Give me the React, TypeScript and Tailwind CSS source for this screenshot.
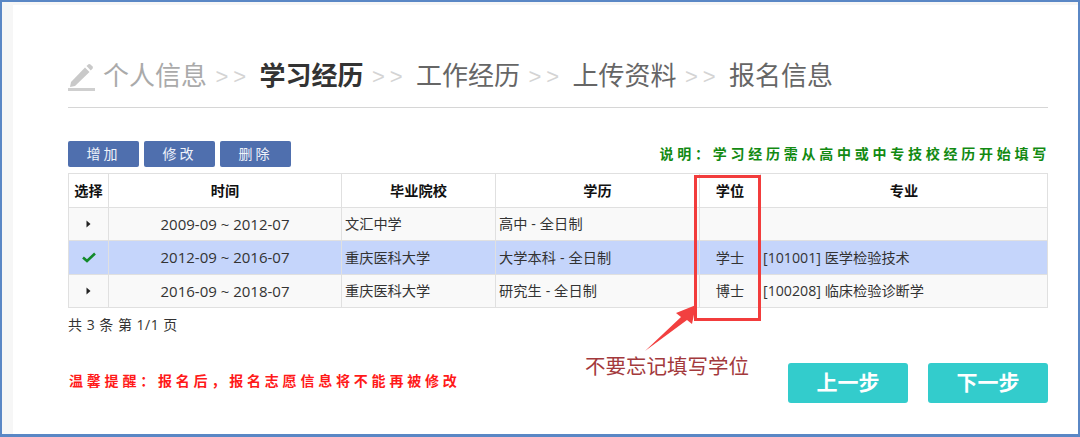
import React from "react";

const FONT = '"Liberation Sans", "Noto Sans CJK SC", sans-serif';
const CELL_FONT = '"Open Sans", "Noto Sans CJK SC", sans-serif';

const rows = [
  { sel: false, time: "2009-09 ~ 2012-07", school: "文汇中学", edu: "高中 - 全日制", deg: "", major: "" },
  { sel: true, time: "2012-09 ~ 2016-07", school: "重庆医科大学", edu: "大学本科 - 全日制", deg: "学士", major: "[101001] 医学检验技术" },
  { sel: false, time: "2016-09 ~ 2018-07", school: "重庆医科大学", edu: "研究生 - 全日制", deg: "博士", major: "[100208] 临床检验诊断学" },
];

function Sep() {
  return <span className="w-[52.5px] text-center text-[22px] tracking-[5px] text-[#d4d4d4]">&gt;&gt;</span>;
}

function Pencil() {
  return (
    <svg width="27" height="28" viewBox="0 0 27 28" className="mr-[8px]">
      <path d="M3 19 L17 4.5 L21.5 9 L7 23 L2 24 Z" fill="#c9c9c9" />
      <path d="M18.5 3 L20.5 1.2 Q21.5 .6 22.5 1.4 L24.6 3.6 Q25.3 4.6 24.6 5.4 L22.8 7.4 Z" fill="#c9c9c9" />
      <rect x="0" y="25" width="27" height="3" fill="#cfcfcf" />
    </svg>
  );
}

export default function App() {
  return (
    <div
      className="relative h-[437px] w-[1080px] overflow-hidden border-x-2 border-t-2 border-b-[3px] border-[#5a87c5] bg-[#f6f6f6] pl-[11px] pt-[3px] pr-0"
      style={{ fontFamily: FONT }}
    >
      <div className="h-full bg-white pl-[55px] pr-[30px] pt-[51px]">
        <div className="flex h-[41px] items-center text-[26px] leading-[41px] text-[#666]">
          <Pencil />
          <span className="text-[#aaaaaa]">个人信息</span>
          <Sep />
          <span className="font-bold text-[#333]">学习经历</span>
          <Sep />
          <span>工作经历</span>
          <Sep />
          <span>上传资料</span>
          <Sep />
          <span>报名信息</span>
        </div>
        <div className="mt-[10px] h-px bg-[#d6d6d6]" />

        <div className="mt-[33px] flex h-[27px] items-start justify-between">
          <div className="flex gap-[5px]">
            {["增加", "修改", "删除"].map((t) => (
              <button
                key={t}
                className="h-[26px] w-[71px] rounded-[2px] bg-[#4f6fae] text-[14px] tracking-[3px] text-[#eef2fa]"
              >
                {t}
              </button>
            ))}
          </div>
          <span className="mr-[-2px] mt-[3px] text-[14px] font-bold tracking-[3.75px] text-[#128a12]">
            说明：学习经历需从高中或中专技校经历开始填写
          </span>
        </div>

        <table
          className="mt-[5px] w-[979px] table-fixed border-collapse text-[14.2px] text-[#333]"
          style={{ fontFamily: CELL_FONT }}
        >
          <colgroup>
            <col className="w-[40px]" />
            <col className="w-[233px]" />
            <col className="w-[154px]" />
            <col className="w-[204px]" />
            <col className="w-[61px]" />
            <col className="w-[287px]" />
          </colgroup>
          <thead>
            <tr className="h-[33.5px] bg-white">
              {["选择", "时间", "毕业院校", "学历", "学位", "专业"].map((h) => (
                <th key={h} className="border border-[#e0e0e0] p-0 text-center font-bold text-[#111]">
                  {h}
                </th>
              ))}
            </tr>
          </thead>
          <tbody>
            {rows.map((r) => (
              <tr key={r.time} className={r.sel ? "h-[33.5px] bg-[#c5d5fb]" : "h-[33.5px] bg-[#f9f9f9]"}>
                <td className="border border-[#e0e0e0] p-0 text-center">
                  {r.sel ? (
                    <svg width="14" height="11" viewBox="0 0 14 11" className="mx-auto">
                      <path d="M1 5.5 L5 9 L13 1.5" fill="none" stroke="#128a2a" strokeWidth="2.6" />
                    </svg>
                  ) : (
                    <svg width="5" height="8" viewBox="0 0 5 8" className="mx-auto">
                      <path d="M0.5 0.5 L4.5 4 L0.5 7.5 Z" fill="#222" />
                    </svg>
                  )}
                </td>
                <td className="border border-[#e0e0e0] p-0 text-center text-[15px]">{r.time}</td>
                <td className="border border-[#e0e0e0] px-[3px] py-0">{r.school}</td>
                <td className="border border-[#e0e0e0] px-[3px] py-0 tracking-[0.1px]">{r.edu}</td>
                <td className="border border-[#e0e0e0] p-0 text-center">{r.deg}</td>
                <td className="border border-[#e0e0e0] px-[2px] py-0">{r.major}</td>
              </tr>
            ))}
          </tbody>
        </table>

        <div className="mt-[7px] text-[14px] leading-[20px] tracking-[0.5px] text-[#333]" style={{ fontFamily: CELL_FONT }}>
          共 3 条 第 1/1 页
        </div>

        <div className="mt-[28px] flex items-start justify-between">
          <span className="ml-px mt-[8px] text-[14px] font-bold tracking-[3.8px] text-[#ff1a1a]">
            温馨提醒：报名后，报名志愿信息将不能再被修改
          </span>
          <div className="flex gap-[20px]">
            <button className="h-[40px] w-[120px] rounded-[3px] bg-[#33cccc] text-[21px] font-bold text-white">上一步</button>
            <button className="h-[40px] w-[120px] rounded-[3px] bg-[#33cccc] text-[21px] font-bold text-white">下一步</button>
          </div>
        </div>
      </div>

      <div className="absolute left-[692px] top-[173px] h-[146px] w-[67px] border-[3px] border-[#f23c3c]" />
      <svg className="absolute left-[642px] top-[302px]" width="56" height="50" viewBox="0 0 56 50">
        <path d="M1 47 L37 13 L32 9 L52 1 L48 20 L43 16 Z" fill="#f24040" />
      </svg>
      <span className="absolute left-[583px] top-[352px] text-[20.5px] leading-[26px] text-[#a3393c]">不要忘记填写学位</span>
    </div>
  );
}
